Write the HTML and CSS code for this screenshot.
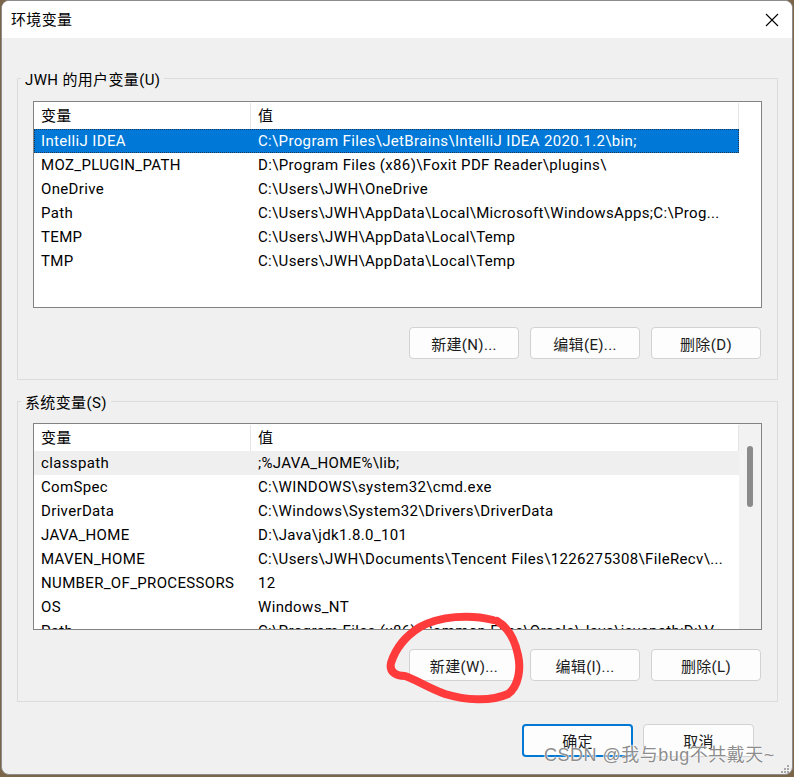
FILE: index.html
```html
<!DOCTYPE html>
<html lang="zh-cn">

<head>
  <meta charset="UTF-8">
  <meta name="viewport" content="width=device-width, initial-scale=1.0">
  <link rel="stylesheet" href="styles.css">
  <title>环境变量</title>
</head>

<body>
  <div class="window">
    <div class="titlebar">
      <span class="title">环境变量</span>
      <span class="close">
        <svg width="14" height="14" viewBox="0 0 14 14">
          <path d="M1 1 L13 13 M13 1 L1 13" stroke="#000" stroke-width="1.1" fill="none" />
        </svg>
      </span>
    </div>

    <div class="content">
      <fieldset class="group">
        <legend>JWH 的用户变量(U)</legend>
        <div class="group-body">
          <div class="list">
            <div class="list-main">
              <div class="list-head">
                <div class="cell name">变量</div>
                <div class="cell value">值</div>
              </div>
              <div class="list-body">
                <div class="row selected"><span class="cell name">IntelliJ IDEA</span><span class="cell value">C:\Program Files\JetBrains\IntelliJ IDEA 2020.1.2\bin;</span></div>
                <div class="row"><span class="cell name">MOZ_PLUGIN_PATH</span><span class="cell value">D:\Program Files (x86)\Foxit PDF Reader\plugins\</span></div>
                <div class="row"><span class="cell name">OneDrive</span><span class="cell value">C:\Users\JWH\OneDrive</span></div>
                <div class="row"><span class="cell name">Path</span><span class="cell value">C:\Users\JWH\AppData\Local\Microsoft\WindowsApps;C:\Prog...</span></div>
                <div class="row"><span class="cell name">TEMP</span><span class="cell value">C:\Users\JWH\AppData\Local\Temp</span></div>
                <div class="row"><span class="cell name">TMP</span><span class="cell value">C:\Users\JWH\AppData\Local\Temp</span></div>
              </div>
            </div>
            <div class="list-side"></div>
          </div>
          <div class="actions">
            <button type="button" class="btn">新建(N)...</button>
            <button type="button" class="btn">编辑(E)...</button>
            <button type="button" class="btn">删除(D)</button>
          </div>
        </div>
      </fieldset>

      <fieldset class="group second">
        <legend>系统变量(S)</legend>
        <div class="group-body">
          <div class="list">
            <div class="list-main">
              <div class="list-head">
                <div class="cell name">变量</div>
                <div class="cell value">值</div>
              </div>
              <div class="list-body">
                <div class="row hover"><span class="cell name">classpath</span><span class="cell value">;%JAVA_HOME%\lib;</span></div>
                <div class="row"><span class="cell name">ComSpec</span><span class="cell value">C:\WINDOWS\system32\cmd.exe</span></div>
                <div class="row"><span class="cell name">DriverData</span><span class="cell value">C:\Windows\System32\Drivers\DriverData</span></div>
                <div class="row"><span class="cell name">JAVA_HOME</span><span class="cell value">D:\Java\jdk1.8.0_101</span></div>
                <div class="row"><span class="cell name">MAVEN_HOME</span><span class="cell value">C:\Users\JWH\Documents\Tencent Files\1226275308\FileRecv\...</span></div>
                <div class="row"><span class="cell name">NUMBER_OF_PROCESSORS</span><span class="cell value">12</span></div>
                <div class="row"><span class="cell name">OS</span><span class="cell value">Windows_NT</span></div>
                <div class="row"><span class="cell name">Path</span><span class="cell value">C:\Program Files (x86)\Common Files\Oracle\Java\javapath;D:\V...</span></div>
              </div>
            </div>
            <div class="list-side scrollbar">
              <div class="thumb"></div>
            </div>
          </div>
          <div class="actions">
            <button type="button" class="btn">新建(W)...</button>
            <button type="button" class="btn">编辑(I)...</button>
            <button type="button" class="btn">删除(L)</button>
          </div>
        </div>
      </fieldset>

      <div class="footer">
        <button type="button" class="btn default">确定</button>
        <button type="button" class="btn">取消</button>
      </div>
    </div>
  </div>

  <!-- annotations drawn over the screenshot -->
  <div class="overlay">
    <svg class="marks" width="794" height="777" viewBox="0 0 794 777">
      <path d="M493 620 C470 614 440 616 420 627 C404 637 395 650 391 663 C389 672 396 676 405 676 C415 679 428 688 445 694 C465 700 490 702 508 694 C519 686 521 668 518 655 C515 640 509 628 497 621"
        stroke="#ff3b3b" stroke-width="8" fill="none" stroke-linecap="round" stroke-linejoin="round" />
      <g fill="#a8a8a8">
        <rect x="787" y="765" width="2" height="2" />
        <rect x="784" y="768" width="2" height="2" />
        <rect x="787" y="768" width="2" height="2" />
        <rect x="781" y="771" width="2" height="2" />
        <rect x="784" y="771" width="2" height="2" />
        <rect x="787" y="771" width="2" height="2" />
      </g>
    </svg>
    <span class="watermark">CSDN @我与bug不共戴天~</span>
  </div>
</body>

</html>
```

FILE: styles.css
```css
* {
  margin: 0;
  padding: 0;
  box-sizing: border-box;
}

body {
  width: 794px;
  height: 777px;
  overflow: hidden;
  background: #7b6549;
  font-family: Roboto, 'Noto Sans CJK SC', sans-serif;
  font-size: 15px;
  letter-spacing: 0.35px;
  color: #000;
}

.window {
  position: relative;
  width: 792px;
  height: 775px;
  margin-left: 1px;
  background: #f0f0f0;
  border: 1px solid #8c8c8c;
  border-radius: 8px;
  overflow: hidden;
}

.titlebar {
  height: 37px;
  background: #fff;
  display: flex;
  align-items: center;
  justify-content: space-between;
  padding: 0 13px 0 9px;
}

.title {
  font-size: 15px;
  line-height: 20px;
  padding-top: 1px;
}

.close {
  display: flex;
  width: 14px;
  height: 14px;
}

.content {
  padding-top: 28px;
}

/* group boxes */

.group {
  margin: 0 14px 0 15px;
  border: 1px solid #dcdcdc;
  padding: 0;
  min-width: 0;
}

.group.second {
  margin-top: 9px;
}

.group legend {
  margin-left: 3px;
  padding: 4px 4px 0;
  line-height: 20px;
  font-size: 15px;
}

.group-body {
  padding: 11px 15px 20px 15px;
}

.group.second .group-body {
  padding-top: 10px;
  padding-bottom: 20px;
}

/* list views */

.list {
  display: flex;
  height: 207px;
  background: #fff;
  border: 1px solid #838383;
  overflow: hidden;
}

.list-main {
  width: 705px;
  overflow: hidden;
}

.list-side {
  flex: 1;
}

.list-head,
.row {
  display: grid;
  grid-template-columns: 217px 488px;
}

.list-head {
  height: 27px;
  line-height: 26px;
  padding-top: 1px;
}

.list-head .cell {
  border-right: 1px solid #e5e5e5;
}

.cell {
  padding-left: 7px;
  white-space: nowrap;
  overflow: hidden;
}

.row {
  height: 24px;
  line-height: 24px;
}

.row.selected {
  background: #0078d7;
  color: #fff;
  outline: 1px dotted #1b3a5a;
  outline-offset: -1px;
}

.row.hover {
  background: #efefef;
}

.scrollbar {
  background: #f2f2f2;
  display: flex;
  justify-content: center;
  padding-top: 22px;
}

.thumb {
  width: 6px;
  height: 61px;
  background: #8a8a8a;
  border-radius: 3px;
}

/* buttons */

.actions {
  display: flex;
  justify-content: flex-end;
  gap: 11px;
  margin-top: 19px;
  padding-right: 1px;
}

.btn {
  width: 110px;
  height: 32px;
  font-family: inherit;
  font-size: 15px;
  letter-spacing: inherit;
  color: #1b1b1b;
  background: #fdfdfd;
  border: 1px solid #d2d2d2;
  border-radius: 4px;
}

.footer {
  display: flex;
  justify-content: flex-end;
  gap: 10px;
  margin-top: 22px;
  padding-right: 38px;
}

.footer .btn {
  width: 111px;
  height: 33px;
}

.btn.default {
  border: 2px solid #0078d4;
}

/* annotations */

.overlay {
  position: absolute;
  top: 0;
  left: 0;
  width: 794px;
  height: 777px;
  pointer-events: none;
}

.marks {
  display: block;
}

.watermark {
  position: absolute;
  left: 544px;
  top: 744px;
  font-family: 'Liberation Sans', 'Noto Sans CJK SC', sans-serif;
  font-size: 18px;
  letter-spacing: 0.5px;
  line-height: 22px;
  color: rgba(110, 110, 110, 0.8);
  text-shadow: 0 0 1px #fff, 0 0 1px #fff, 0 0 2px #fff;
  white-space: nowrap;
}
```
